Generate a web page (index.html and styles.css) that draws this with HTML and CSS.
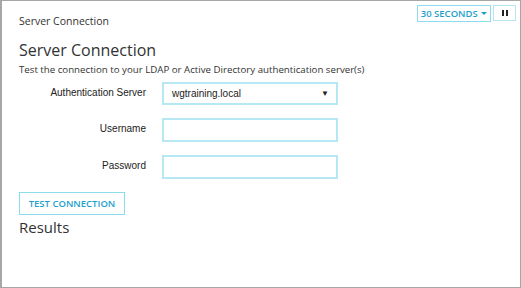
FILE: index.html
```html
<!DOCTYPE html>
<html>
<head>
  <title>Server Connection</title>
  <link rel="stylesheet" href="styles.css">
</head>
<body>
  <div class="frame">
    <div class="topbar">
      <div class="crumb">Server Connection</div>
      <div class="controls">
        <div class="refresh">30 SECONDS <span class="caret"></span></div>
        <div class="pause"><span></span><span></span></div>
      </div>
    </div>

    <div class="content">
      <h1 class="title">Server Connection</h1>
      <p class="intro">Test the connection to your LDAP or Active Directory authentication server(s)</p>

      <div class="form">
        <label class="label">Authentication Server</label>
        <div class="field select">
          <span>wgtraining.local</span>
          <span class="arrow">&#9660;</span>
        </div>

        <label class="label">Username</label>
        <div class="field"></div>

        <label class="label">Password</label>
        <div class="field"></div>
      </div>

      <div class="test-btn">TEST CONNECTION</div>
      <h2 class="results">Results</h2>
    </div>
  </div>
</body>
</html>
```

FILE: styles.css
```css
/* Server connection test page */
body {
  margin: 0;
  font-family: "Open Sans", sans-serif;
  color: #333;
}
.frame {
  width: 521px;
  height: 288px;
  box-sizing: border-box;
  border: 1px solid #a6a6a6;
  border-left-width: 2px;
  background: #fff;
}
.topbar {
  display: flex;
  justify-content: space-between;
  align-items: flex-start;
  padding: 4px 4px 0 17px;
}
.crumb {
  font-size: 10.5px;
  margin-top: 9px;
  color: #333;
}
.controls {
  display: flex;
  gap: 2px;
}
.refresh {
  height: 15px;
  width: 72px;
  border: 1px solid #8adcee;
  color: #1f9fcc;
  font-size: 9.5px;
  font-weight: 600;
  line-height: 15px;
  text-align: center;
}
.caret {
  display: inline-block;
  width: 0;
  height: 0;
  border-left: 3px solid transparent;
  border-right: 3px solid transparent;
  border-top: 3px solid #1f9fcc;
  vertical-align: 2px;
  margin-left: 1px;
}
.pause {
  width: 21px;
  height: 14px;
  border: 1px solid #b7e6f0;
  display: flex;
  justify-content: center;
  align-items: center;
  gap: 2px;
}
.pause span {
  width: 2px;
  height: 6px;
  background: #222;
}
.content {
  padding-left: 17px;
}
.title {
  margin: 12px 0 0;
  font-size: 16px;
  font-weight: 400;
  line-height: 21px;
  color: #333;
}
.intro {
  margin: 1px 0 0;
  font-size: 9.7px;
  line-height: 15px;
}
.form {
  display: grid;
  grid-template-columns: 127px 176px;
  column-gap: 16px;
  row-gap: 13px;
  align-items: center;
  margin-top: 5px;
  font-family: "Liberation Sans", Arial, sans-serif;
  font-size: 10px;
}
.label {
  text-align: right;
  color: #222;
  margin-top: -3px;
}
.field {
  height: 24px;
  box-sizing: border-box;
  border: 2px solid #b5e8f2;
}
.select {
  height: 23px;
  display: flex;
  justify-content: space-between;
  align-items: center;
  padding: 0 7px 0 8px;
  color: #222;
}
.arrow {
  font-size: 8px;
}
.test-btn {
  width: 106px;
  height: 23px;
  box-sizing: border-box;
  border: 1px solid #8adcee;
  margin-top: 13px;
  color: #1f9fcc;
  font-size: 9.5px;
  font-weight: 600;
  line-height: 21px;
  text-align: center;
}
.results {
  margin: 2px 0 0;
  font-size: 15px;
  font-weight: 400;
  line-height: 20px;
  color: #333;
}
```
